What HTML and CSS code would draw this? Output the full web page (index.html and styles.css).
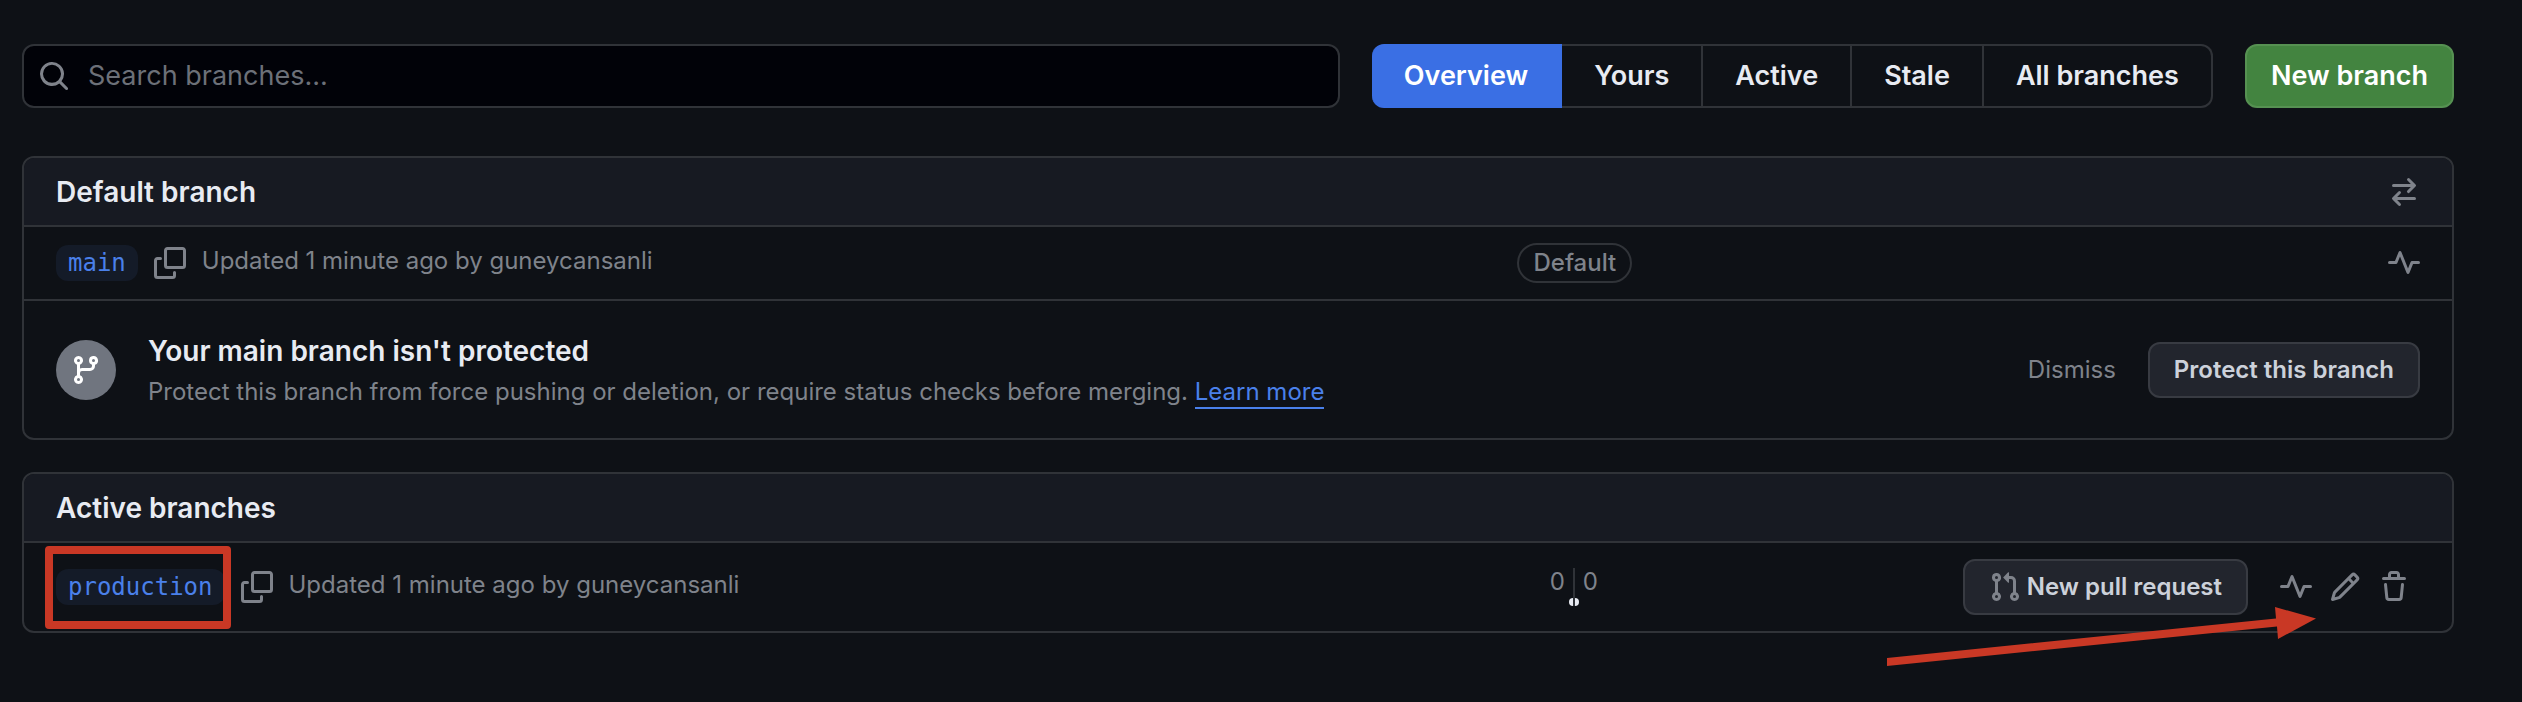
FILE: index.html
```html
<!DOCTYPE html>
<html lang="en">
<head>
<meta charset="utf-8">
<title>Branches</title>
<link rel="stylesheet" href="styles.css">
</head>
<body>
<svg class="sprite" aria-hidden="true">
  <symbol id="search" viewBox="0 0 16 16"><path d="M10.68 11.74a6 6 0 0 1-7.922-8.982 6 6 0 0 1 8.982 7.922l3.04 3.04a.749.749 0 0 1-.326 1.275.749.749 0 0 1-.734-.215ZM11.5 7a4.499 4.499 0 1 0-8.997 0A4.499 4.499 0 0 0 11.5 7Z"/></symbol>
  <symbol id="copy" viewBox="0 0 16 16"><path d="M0 6.75C0 5.784.784 5 1.75 5h1.5a.75.75 0 0 1 0 1.5h-1.5a.25.25 0 0 0-.25.25v7.5c0 .138.112.25.25.25h7.5a.25.25 0 0 0 .25-.25v-1.5a.75.75 0 0 1 1.5 0v1.5A1.75 1.75 0 0 1 9.25 16h-7.5A1.75 1.75 0 0 1 0 14.25Z"/><path d="M5 1.75C5 .784 5.784 0 6.75 0h7.5C15.216 0 16 .784 16 1.75v7.5A1.75 1.75 0 0 1 14.25 11h-7.5A1.75 1.75 0 0 1 5 9.25Zm1.75-.25a.25.25 0 0 0-.25.25v7.5c0 .138.112.25.25.25h7.5a.25.25 0 0 0 .25-.25v-7.5a.25.25 0 0 0-.25-.25Z"/></symbol>
  <symbol id="pulse" viewBox="0 0 16 16"><path d="M6 2c.306 0 .582.187.696.471L10 10.731l1.304-3.26A.751.751 0 0 1 12 7h3.25a.75.75 0 0 1 0 1.5h-2.742l-1.812 4.528a.751.751 0 0 1-1.392 0L6 4.77 4.696 8.03A.75.75 0 0 1 4 8.5H.75a.75.75 0 0 1 0-1.5h2.742l1.812-4.529A.751.751 0 0 1 6 2Z"/></symbol>
  <symbol id="switch" viewBox="0 0 16 16"><path d="M5.22 14.78a.75.75 0 0 0 1.06-1.06L4.56 12h8.69a.75.75 0 0 0 0-1.5H4.56l1.72-1.72a.75.75 0 0 0-1.06-1.06l-3 3a.75.75 0 0 0 0 1.06l3 3Zm5.56-6.5a.75.75 0 1 1-1.06-1.06l1.72-1.72H2.75a.75.75 0 0 1 0-1.5h8.69L9.72 2.28a.75.75 0 0 1 1.06-1.06l3 3a.75.75 0 0 1 0 1.06l-3 3Z"/></symbol>
  <symbol id="branch" viewBox="0 0 16 16"><path d="M9.5 3.25a2.25 2.25 0 1 1 3 2.122V6A2.5 2.5 0 0 1 10 8.5H6a1 1 0 0 0-1 1v1.128a2.251 2.251 0 1 1-1.5 0V5.372a2.25 2.25 0 1 1 1.5 0v1.836A2.493 2.493 0 0 1 6 7h4a1 1 0 0 0 1-1v-.628A2.25 2.25 0 0 1 9.5 3.25Zm-6 0a.75.75 0 1 0 1.5 0 .75.75 0 0 0-1.5 0Zm8.25-.75a.75.75 0 1 0 0 1.5.75.75 0 0 0 0-1.5ZM4.25 12a.75.75 0 1 0 0 1.5.75.75 0 0 0 0-1.5Z"/></symbol>
  <symbol id="pull" viewBox="0 0 16 16"><path d="M1.5 3.25a2.25 2.25 0 1 1 3 2.122v5.256a2.251 2.251 0 1 1-1.5 0V5.372A2.25 2.25 0 0 1 1.5 3.25Zm5.677-.177L9.573.677A.25.25 0 0 1 10 .854V2.5h1A2.5 2.5 0 0 1 13.5 5v5.628a2.251 2.251 0 1 1-1.5 0V5a1 1 0 0 0-1-1h-1v1.646a.25.25 0 0 1-.427.177L7.177 3.427a.25.25 0 0 1 0-.354ZM3.75 2.5a.75.75 0 1 0 0 1.5.75.75 0 0 0 0-1.5Zm0 9.5a.75.75 0 1 0 0 1.5.75.75 0 0 0 0-1.5Zm8.25.75a.75.75 0 1 0 1.5 0 .75.75 0 0 0-1.5 0Z"/></symbol>
  <symbol id="pencil" viewBox="0 0 16 16"><path d="M11.013 1.427a1.75 1.75 0 0 1 2.474 0l1.086 1.086a1.75 1.75 0 0 1 0 2.474l-8.61 8.61c-.21.21-.47.364-.756.445l-3.251.93a.75.75 0 0 1-.927-.928l.929-3.25c.081-.286.235-.547.445-.758l8.61-8.61Zm.176 4.823L9.75 4.81l-6.286 6.287a.253.253 0 0 0-.064.108l-.558 1.953 1.953-.558a.253.253 0 0 0 .108-.064Zm1.238-3.763a.25.25 0 0 0-.354 0L10.811 3.75l1.439 1.44 1.263-1.263a.25.25 0 0 0 0-.354Z"/></symbol>
  <symbol id="trash" viewBox="0 0 16 16"><path d="M11 1.75V3h2.25a.75.75 0 0 1 0 1.5H2.75a.75.75 0 0 1 0-1.5H5V1.75C5 .784 5.784 0 6.75 0h2.5C10.216 0 11 .784 11 1.75ZM4.496 6.675l.66 6.6a.25.25 0 0 0 .249.225h5.19a.25.25 0 0 0 .249-.225l.66-6.6a.75.75 0 0 1 1.492.149l-.66 6.6A1.748 1.748 0 0 1 10.595 15h-5.19a1.75 1.75 0 0 1-1.741-1.575l-.66-6.6a.75.75 0 1 1 1.492-.15ZM6.5 1.75V3h3V1.75a.25.25 0 0 0-.25-.25h-2.5a.25.25 0 0 0-.25.25Z"/></symbol>
</svg>

<main class="page">
  <div class="toolbar">
    <label class="search">
      <svg class="icon"><use href="#search"/></svg>
      <input class="search-input" type="text" placeholder="Search branches..." aria-label="Search branches">
    </label>
    <nav class="tabs" aria-label="Branch filters">
      <a class="tab tab-selected" href="#overview" aria-current="page">Overview</a>
      <a class="tab" href="#yours">Yours</a>
      <a class="tab" href="#active">Active</a>
      <a class="tab" href="#stale">Stale</a>
      <a class="tab" href="#all">All branches</a>
    </nav>
    <button class="btn-new" type="button">New branch</button>
  </div>

  <section class="panel">
    <header class="panel-header">
      <h2 class="title">Default branch</h2>
      <button class="icon-btn" type="button" aria-label="Switch default branch"><svg class="icon"><use href="#switch"/></svg></button>
    </header>
    <div class="row row-default">
      <div class="branch">
        <a class="ref" href="#main">main</a>
        <button class="icon-btn" type="button" aria-label="Copy main"><svg class="icon"><use href="#copy"/></svg></button>
        <span class="meta">Updated 1 minute ago by guneycansanli</span>
      </div>
      <div class="status"><span class="pill">Default</span></div>
      <div class="actions">
        <button class="icon-btn" type="button" aria-label="Activity"><svg class="icon"><use href="#pulse"/></svg></button>
      </div>
    </div>
    <div class="notice">
      <span class="notice-icon"><svg class="icon"><use href="#branch"/></svg></span>
      <div class="notice-text">
        <h3 class="title">Your main branch isn't protected</h3>
        <p class="notice-desc">Protect this branch from force pushing or deletion, or require status checks before merging. <a class="link" href="#learn">Learn more</a></p>
      </div>
      <button class="btn-dismiss" type="button">Dismiss</button>
      <button class="btn" type="button">Protect this branch</button>
    </div>
  </section>

  <section class="panel">
    <header class="panel-header">
      <h2 class="title">Active branches</h2>
    </header>
    <div class="row row-active">
      <div class="branch">
        <span class="marked"><a class="ref" href="#production">production</a></span>
        <button class="icon-btn" type="button" aria-label="Copy production"><svg class="icon"><use href="#copy"/></svg></button>
        <span class="meta">Updated 1 minute ago by guneycansanli</span>
      </div>
      <div class="status">
        <div class="diff">
          <div class="diff-side diff-behind"><span>0</span><i class="diff-bar"></i></div>
          <div class="diff-side diff-ahead"><span>0</span><i class="diff-bar"></i></div>
        </div>
      </div>
      <div class="actions actions-active">
        <button class="btn btn-pull" type="button"><svg class="icon"><use href="#pull"/></svg>New pull request</button>
        <div class="icon-group">
          <button class="icon-btn" type="button" aria-label="Activity"><svg class="icon"><use href="#pulse"/></svg></button>
          <button class="icon-btn" type="button" aria-label="Rename branch"><svg class="icon"><use href="#pencil"/></svg></button>
          <button class="icon-btn" type="button" aria-label="Delete branch"><svg class="icon"><use href="#trash"/></svg></button>
        </div>
      </div>
      <svg class="arrow" viewBox="0 0 430 62" aria-hidden="true"><path d="M1 52 390 12.500 389 1 430 12.500 392 33 391 20.500 1 60Z"/></svg>
    </div>
  </section>
</main>
</body>
</html>
```

FILE: styles.css
```css
:root {
  --bg: #0e1116;
  --header: #171a22;
  --line: #303338;
  --muted: #7f838b;
  --text: #e8ebf2;
  --blue: #4a80ea;
  --mark: #c93825;
}

* { box-sizing: border-box; }

body {
  margin: 0;
  min-height: 100vh;
  background: var(--bg);
  color: var(--text);
  font: 24px/36px Inter, "Liberation Sans", sans-serif;
}

h2, h3, p { margin: 0; }
a { color: inherit; text-decoration: none; }
button { margin: 0; padding: 0; border: 0; background: none; font: inherit; color: inherit; cursor: pointer; }

.sprite { display: none; }

.icon { display: block; flex: none; width: 32px; height: 32px; fill: currentColor; }
.icon-btn { flex: none; color: var(--muted); }

.page { display: flex; flex-direction: column; gap: 32px; padding: 44px 68px 44px 22px; }

.toolbar { display: flex; gap: 32px; height: 64px; margin-bottom: 16px; font-size: 27px; font-weight: 600; }

.search {
  display: flex;
  flex: 1;
  align-items: center;
  gap: 18px;
  padding-left: 14px;
  border: 2px solid var(--line);
  border-radius: 12px;
  background: #010208;
  color: var(--muted);
}

.search-input {
  flex: 1;
  min-width: 0;
  padding: 0;
  border: 0;
  outline: 0;
  background: none;
  color: var(--text);
  font: inherit;
  font-weight: 400;
}

.search-input::placeholder { color: #6c7078; opacity: 1; }

.tabs { display: flex; }

.tab {
  display: flex;
  align-items: center;
  padding: 0 32px;
  border: 2px solid var(--line);
  border-left-width: 0;
}

.tab-selected { border-color: #3a6fe4; border-radius: 12px 0 0 12px; background: #3a6fe4; color: #fff; }
.tab:last-child { border-radius: 0 12px 12px 0; }

.btn-new {
  padding: 0 24px;
  border: 2px solid #569152;
  border-radius: 12px;
  background: #438440;
  color: #fff;
}

.panel { border: 2px solid var(--line); border-radius: 12px; }

.panel-header {
  display: flex;
  align-items: center;
  justify-content: space-between;
  padding: 16px 32px;
  border-radius: 10px 10px 0 0;
  background: var(--header);
}

.title { padding-top: 2px; font-size: 28px; line-height: 33px; font-weight: 600; }

.row {
  position: relative;
  display: grid;
  grid-template-columns: 114fr 29fr 57fr;
  align-items: center;
  border-top: 2px solid var(--line);
}

.row-default { padding: 18px 32px; }
.row-active { padding: 16px 32px; }

.branch { display: flex; align-items: center; gap: 16px; }

.ref {
  display: block;
  padding: 0 12px;
  border-radius: 12px;
  background: #141b28;
  color: var(--blue);
  font: 24px/36px "DejaVu Sans Mono", "Liberation Mono", monospace;
}

.meta { padding-bottom: 4px; line-height: 32px; color: var(--muted); white-space: nowrap; }

.marked { position: relative; }
.marked::after {
  content: "";
  position: absolute;
  inset: -23px -6px -24px -11px;
  border: 8px solid var(--mark);
  border-radius: 4px;
}

.status { display: flex; justify-content: center; height: 36px; align-items: center; }

.pill {
  padding: 0 14px;
  border: 2px solid var(--line);
  border-radius: 20px;
  color: var(--muted);
  font-weight: 500;
}

.diff { display: flex; }
.diff-side { display: flex; flex-direction: column; justify-content: space-between; width: 26px; height: 38px; line-height: 28px; color: var(--muted); }
.diff-side span { padding: 0 8px; }
.diff-behind { align-items: flex-end; border-right: 2px solid var(--line); }
.diff-bar { width: 4px; height: 8px; background: #e8ebf2; }
.diff-behind .diff-bar { border-radius: 4px 0 0 4px; }
.diff-ahead .diff-bar { border-radius: 0 4px 4px 0; }

.actions { display: flex; align-items: center; justify-content: flex-end; }
.actions-active { gap: 32px; padding-right: 10px; }
.icon-group { display: flex; gap: 17px; }

.btn {
  display: flex;
  align-items: center;
  height: 56px;
  padding: 0 24px;
  border: 2px solid #383b42;
  border-radius: 12px;
  background: #22252d;
  color: #ccd1da;
  font-weight: 600;
  white-space: nowrap;
}

.btn-pull { gap: 6px; }
.btn-pull .icon { color: var(--muted); }

.notice { display: flex; align-items: center; padding: 26px 32px; border-top: 2px solid var(--line); }

.notice-icon {
  display: grid;
  place-items: center;
  flex: none;
  width: 60px;
  height: 60px;
  margin-right: 32px;
  border-radius: 50%;
  background: #70757f;
  color: #fff;
}

.notice-text { flex: 1; padding-top: 6px; }
.notice-desc { margin-top: 4px; line-height: 40px; color: var(--muted); }
.link { padding-bottom: 1px; border-bottom: 2px solid var(--blue); color: var(--blue); }
.btn-dismiss { margin-right: 32px; color: var(--muted); }

.arrow { position: absolute; top: 63px; right: 136px; width: 430px; height: 62px; fill: var(--mark); }
```
